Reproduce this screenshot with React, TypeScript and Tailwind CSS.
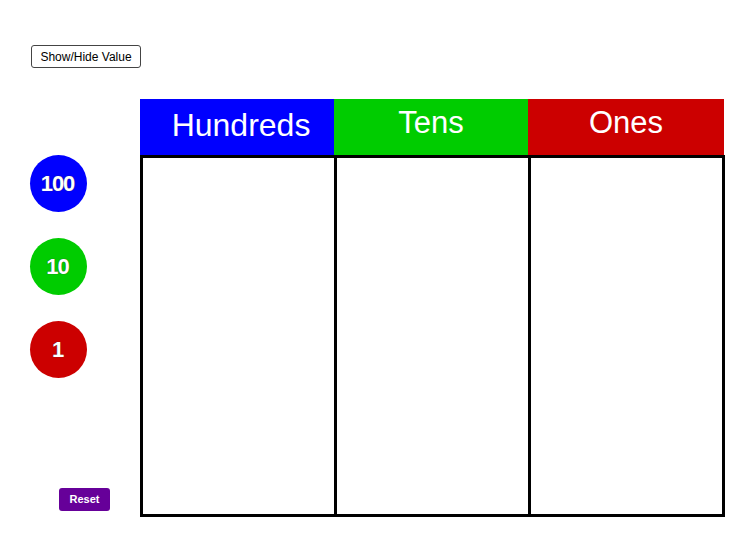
import React from 'react';

const coins = [
  { label: '100', bg: 'bg-[#0000ff]' },
  { label: '10', bg: 'bg-[#00cc00]' },
  { label: '1', bg: 'bg-[#cc0000]' },
];

export default function App() {
  return (
    <div className="w-[750px] h-[550px] bg-white flex font-['Liberation_Sans',Arial,sans-serif]">
      {/* left: controls and coins */}
      <div className="w-[140px] flex flex-col pl-[31px] pt-[45px]">
        <button className="w-[110px] h-[23px] border border-[#444] rounded-[3px] bg-white text-[12px] text-black leading-none">
          Show/Hide Value
        </button>
        <div className="flex flex-col gap-[26px] mt-[87px] -ml-[1px]">
          {coins.map((c) => (
            <div
              key={c.label}
              className={`w-[57px] h-[57px] rounded-full ${c.bg} flex items-center justify-center pr-[2px] text-white font-bold text-[22px] leading-none tracking-[-1px] [text-shadow:0_0_1px_#333]`}
            >
              {c.label}
            </div>
          ))}
        </div>
        <button className="mt-[110px] ml-[28px] w-[51px] h-[23px] rounded-[3px] bg-[#660099] text-white font-bold text-[11px] leading-none">
          Reset
        </button>
      </div>

      {/* right: place value chart */}
      <div className="pt-[99px] w-[585px]">
        <div className="grid grid-cols-[194px_194px_196px] h-[56px] text-white">
          <div className="bg-[#0000ff] flex justify-center pt-[10px] text-[32px] leading-[32px] pl-[8px]">Hundreds</div>
          <div className="bg-[#00cc00] flex justify-center pt-[8px] text-[31px] leading-[31px]">Tens</div>
          <div className="bg-[#cc0000] flex justify-center pt-[8px] text-[31px] leading-[31px]">Ones</div>
        </div>
        <div className="h-[362px] border-[3px] border-black grid grid-cols-[194px_194px_1fr]">
          <div className="border-r-[3px] border-black" />
          <div className="border-r-[3px] border-black" />
          <div />
        </div>
      </div>
    </div>
  );
}
